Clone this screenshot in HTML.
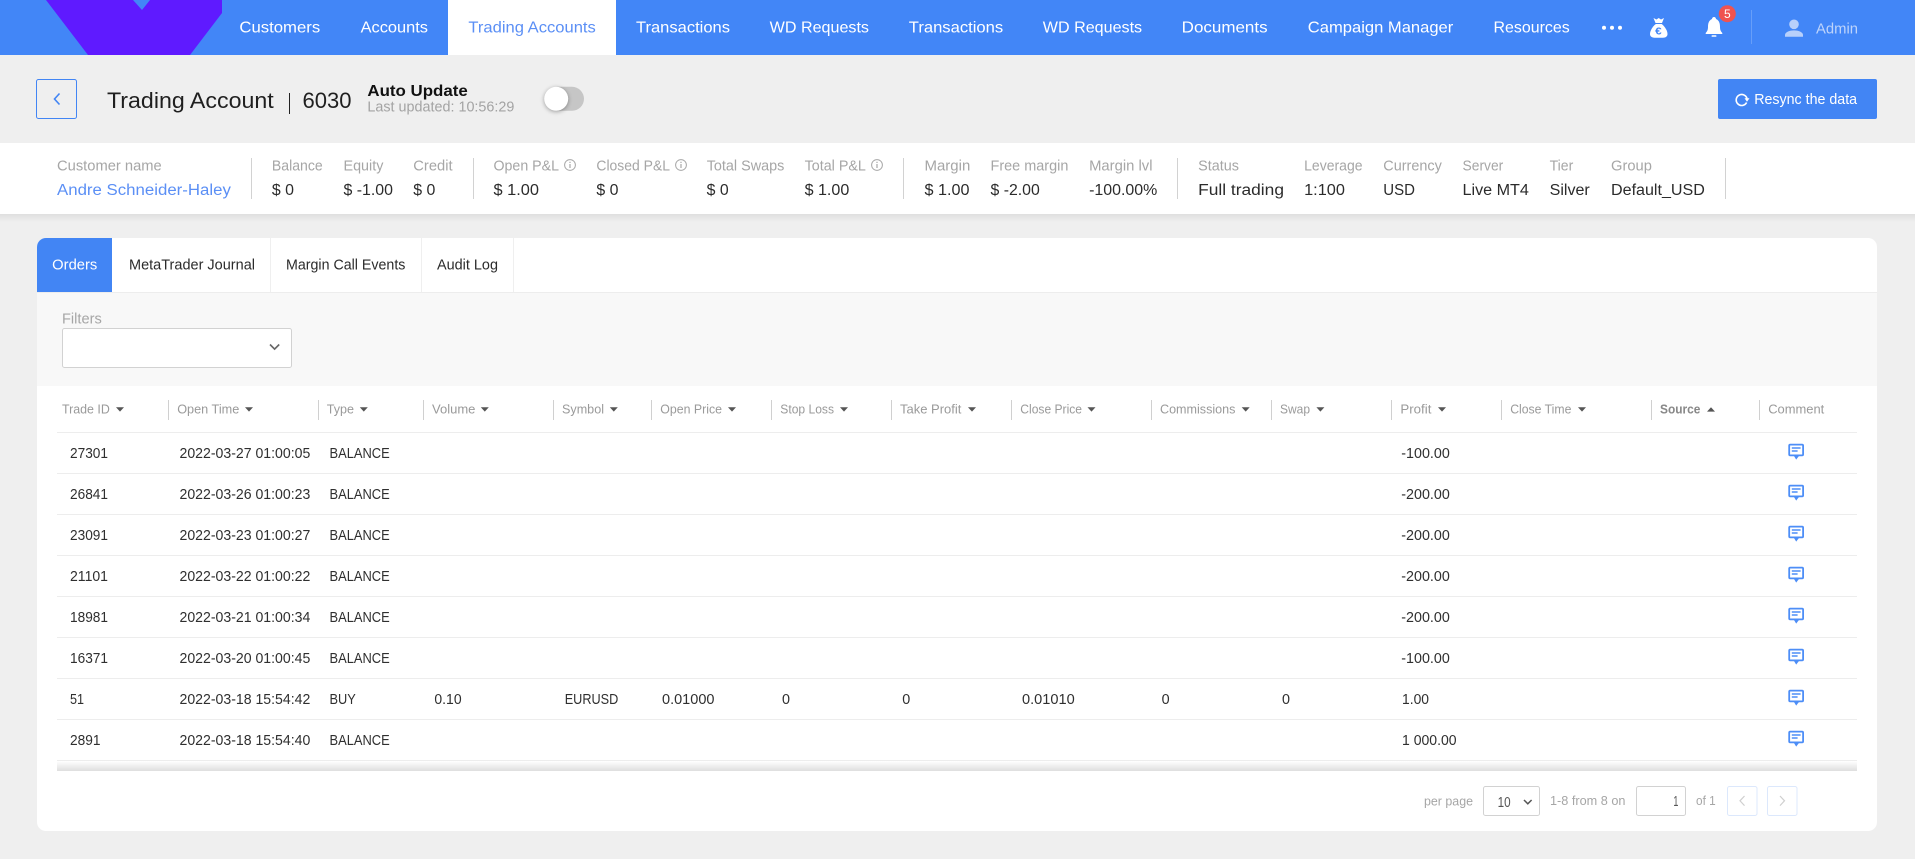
<!DOCTYPE html>
<html lang="en">
<head>
<meta charset="utf-8">
<title>Trading Account</title>
<style>
html,body{margin:0;padding:0;background:#efefef;width:1915px;height:859px;overflow:hidden}
svg{display:block}
text{font-family:"Liberation Sans",sans-serif;white-space:pre}
.n{font-size:16px;fill:#fff}
.l{font-size:14.5px;fill:#a6a6a6}
.v{font-size:15.5px;fill:#2b2b2b}
.h{font-size:13px;fill:#9a9a9a}
.c{font-size:14.3px;fill:#2f2f2f}
.t{font-size:14.5px;fill:#2b2b2b}
.p{font-size:13px;fill:#a6a6a6}
</style>
</head>
<body>
<svg width="1915" height="859" viewBox="0 0 1915 859" xmlns="http://www.w3.org/2000/svg">
<defs>
<linearGradient id="sb" x1="0" y1="0" x2="0" y2="1"><stop offset="0" stop-color="#dfdfdf"/><stop offset="1" stop-color="#efefef"/></linearGradient>
<linearGradient id="ts" x1="0" y1="0" x2="0" y2="1"><stop offset="0" stop-color="#fff"/><stop offset="1" stop-color="#dedede"/></linearGradient>
<path id="d" d="M-4 407.2h8l-4 4.4z" fill="#555"/>
<g id="ci">
<rect x="1789.2" y="444.6" width="13.9" height="10.8" rx="1" fill="#fff" stroke="#4d8ef7" stroke-width="1.8"/>
<path d="M1793.6 455.4h5.8l-3.2 4.2z" fill="#4d8ef7"/>
<path d="M1791.8 448h8.8M1791.8 451h5.8" stroke="#4d8ef7" stroke-width="1.5" fill="none"/>
</g>
<g id="in">
<circle cx="0" cy="165" r="5.4" fill="none" stroke="#a8a8a8" stroke-width="1"/>
<path d="M0 164v4M0 161.8v1.2" stroke="#a8a8a8" stroke-width="1.2" fill="none"/>
</g>
</defs>

<!-- top navigation -->
<rect width="1915" height="55" fill="#4286f7"/>
<path d="M46 0H133L142 10L150 0H222V13L190 55H88Z" fill="#5f1aff"/>
<rect x="448" width="168" height="55" fill="#fff"/>
<text class="n" x="239.4" y="32.5" textLength="80.8" lengthAdjust="spacingAndGlyphs">Customers</text>
<text class="n" x="360.6" y="32.5" textLength="67.4" lengthAdjust="spacingAndGlyphs">Accounts</text>
<text class="n" style="fill:#5b8ff5" x="468.4" y="32.5" textLength="127.4" lengthAdjust="spacingAndGlyphs">Trading Accounts</text>
<text class="n" x="636" y="32.5" textLength="94" lengthAdjust="spacingAndGlyphs">Transactions</text>
<text class="n" x="769.7" y="32.5" textLength="99.3" lengthAdjust="spacingAndGlyphs">WD Requests</text>
<text class="n" x="908.8" y="32.5" textLength="94.4" lengthAdjust="spacingAndGlyphs">Transactions</text>
<text class="n" x="1042.8" y="32.5" textLength="99.3" lengthAdjust="spacingAndGlyphs">WD Requests</text>
<text class="n" x="1181.7" y="32.5" textLength="85.9" lengthAdjust="spacingAndGlyphs">Documents</text>
<text class="n" x="1307.8" y="32.5" textLength="145.5" lengthAdjust="spacingAndGlyphs">Campaign Manager</text>
<text class="n" x="1493.5" y="32.5" textLength="76.2" lengthAdjust="spacingAndGlyphs">Resources</text>
<circle cx="1604" cy="27.7" r="2" fill="#fff"/><circle cx="1612" cy="27.7" r="2" fill="#fff"/><circle cx="1620" cy="27.7" r="2" fill="#fff"/>
<!-- money bag -->
<path d="M1653.5 18L1656.5 19.5L1658.7 18L1661 19.5L1664 18L1662 23H1655.5Z" fill="#fff"/>
<path d="M1655.8 24H1661.7C1665 26.5 1667.5 31 1667.5 34C1667.5 36.5 1665.5 37.7 1663 37.7H1654.5C1652 37.7 1650 36.5 1650 34C1650 31 1652.5 26.5 1655.8 24Z" fill="#fff"/>
<text x="1655.2" y="34.5" font-size="10" font-weight="bold" fill="#4286f7" textLength="6.5" lengthAdjust="spacingAndGlyphs">€</text>
<!-- bell -->
<path d="M1714 17c1.2 0 2 .9 2 2C1719.5 20.5 1720 24 1720 27c0 3 1 4.5 2.3 6v1h-16.6v-1c1.3-1.5 2.3-3 2.3-6 0-3 .5-6.5 4-8 0-1.1.8-2 2-2z" fill="#fff"/>
<rect x="1711.5" y="35.2" width="5" height="1.6" rx=".8" fill="#fff"/>
<circle cx="1727.3" cy="13.7" r="8.5" fill="#ef5350"/>
<text x="1727.3" y="18" font-size="12" fill="#fff" text-anchor="middle">5</text>
<rect x="1751" y="10" width="1" height="34" fill="#fff" fill-opacity=".2"/>
<!-- user -->
<circle cx="1794" cy="24.3" r="4.8" fill="#b8d0fb"/>
<path d="M1785 36.7v-1.7c0-3 5-4.6 9-4.6s9 1.6 9 4.6v1.7z" fill="#b8d0fb"/>
<text x="1816" y="33.7" font-size="14.5" fill="#bed4fb" textLength="42" lengthAdjust="spacingAndGlyphs">Admin</text>

<!-- page header -->
<rect x="36.5" y="79.5" width="40" height="39" rx="2" fill="none" stroke="#4285f4" stroke-width="1"/>
<path d="M59.5 93.5L54.5 99L59.5 104.5" fill="none" stroke="#4285f4" stroke-width="1.6"/>
<text x="107" y="108" font-size="22" fill="#1f1f1f" textLength="166.7" lengthAdjust="spacingAndGlyphs">Trading Account</text>
<rect x="289" y="93" width="1" height="21" fill="#222"/>
<text x="302.5" y="108" font-size="22" fill="#1f1f1f" textLength="49" lengthAdjust="spacingAndGlyphs">6030</text>
<text x="367.4" y="96" font-size="16" font-weight="bold" fill="#111" textLength="100.4" lengthAdjust="spacingAndGlyphs">Auto Update</text>
<text x="367.4" y="111.7" font-size="14.5" fill="#a3a3a3" textLength="147" lengthAdjust="spacingAndGlyphs">Last updated: 10:56:29</text>
<rect x="545" y="86.8" width="39" height="24" rx="12" fill="#c6c6c6"/>
<circle cx="556.2" cy="98.8" r="12" fill="#fff" style="filter:drop-shadow(0 1px 2px rgba(0,0,0,.35))"/>
<rect x="1718" y="79" width="159" height="40" rx="2" fill="#4285f4"/>
<path d="M1746.6 102.5A5.5 5.5 0 1 1 1747 98.5" fill="none" stroke="#fff" stroke-width="1.6"/>
<path d="M1744.5 98.3h5l-2.5 3.4z" fill="#fff"/>
<text x="1754.2" y="104" font-size="14.5" fill="#fff" textLength="102.9" lengthAdjust="spacingAndGlyphs">Resync the data</text>

<!-- info bar -->
<rect x="0" y="214" width="1915" height="8" fill="url(#sb)"/>
<rect x="0" y="143" width="1915" height="71" fill="#fff"/>
<g fill="#d2d2d2">
<rect x="251" y="158" width="1" height="41"/><rect x="473" y="158" width="1" height="41"/><rect x="903" y="158" width="1" height="41"/><rect x="1177" y="158" width="1" height="41"/><rect x="1725" y="158" width="1" height="41"/>
</g>
<g transform="translate(0,-.7)">
<text class="l" x="57" y="171" textLength="104.7" lengthAdjust="spacingAndGlyphs">Customer name</text>
<text class="l" x="271.9" y="171" textLength="50.8" lengthAdjust="spacingAndGlyphs">Balance</text>
<text class="l" x="343.5" y="171" textLength="39.9" lengthAdjust="spacingAndGlyphs">Equity</text>
<text class="l" x="413.3" y="171" textLength="39.3" lengthAdjust="spacingAndGlyphs">Credit</text>
<text class="l" x="493.5" y="171" textLength="65.5" lengthAdjust="spacingAndGlyphs">Open P&amp;L</text>
<text class="l" x="596.4" y="171" textLength="73.6" lengthAdjust="spacingAndGlyphs">Closed P&amp;L</text>
<text class="l" x="706.7" y="171" textLength="77.7" lengthAdjust="spacingAndGlyphs">Total Swaps</text>
<text class="l" x="804.6" y="171" textLength="61.3" lengthAdjust="spacingAndGlyphs">Total P&amp;L</text>
<text class="l" x="924.5" y="171" textLength="45.8" lengthAdjust="spacingAndGlyphs">Margin</text>
<text class="l" x="990.5" y="171" textLength="77.9" lengthAdjust="spacingAndGlyphs">Free margin</text>
<text class="l" x="1089.1" y="171" textLength="63.4" lengthAdjust="spacingAndGlyphs">Margin lvl</text>
<text class="l" x="1198.1" y="171" textLength="40.8" lengthAdjust="spacingAndGlyphs">Status</text>
<text class="l" x="1304.1" y="171" textLength="58.5" lengthAdjust="spacingAndGlyphs">Leverage</text>
<text class="l" x="1383.3" y="171" textLength="58.5" lengthAdjust="spacingAndGlyphs">Currency</text>
<text class="l" x="1462.5" y="171" textLength="40.8" lengthAdjust="spacingAndGlyphs">Server</text>
<text class="l" x="1549.6" y="171" textLength="23.7" lengthAdjust="spacingAndGlyphs">Tier</text>
<text class="l" x="1611" y="171" textLength="40.9" lengthAdjust="spacingAndGlyphs">Group</text>
</g>
<use href="#in" x="570"/><use href="#in" x="681"/><use href="#in" x="877"/>
<text class="v" style="fill:#5b8ff5" x="57" y="195" textLength="173.9" lengthAdjust="spacingAndGlyphs">Andre Schneider-Haley</text>
<text class="v" x="271.9" y="195" textLength="22.1" lengthAdjust="spacingAndGlyphs">$ 0</text>
<text class="v" x="343.5" y="195" textLength="49.5" lengthAdjust="spacingAndGlyphs">$ -1.00</text>
<text class="v" x="413.3" y="195" textLength="22.1" lengthAdjust="spacingAndGlyphs">$ 0</text>
<text class="v" x="493.5" y="195" textLength="45.5" lengthAdjust="spacingAndGlyphs">$ 1.00</text>
<text class="v" x="596.4" y="195" textLength="22.1" lengthAdjust="spacingAndGlyphs">$ 0</text>
<text class="v" x="706.7" y="195" textLength="22" lengthAdjust="spacingAndGlyphs">$ 0</text>
<text class="v" x="804.6" y="195" textLength="44.7" lengthAdjust="spacingAndGlyphs">$ 1.00</text>
<text class="v" x="924.5" y="195" textLength="45" lengthAdjust="spacingAndGlyphs">$ 1.00</text>
<text class="v" x="990.5" y="195" textLength="49.3" lengthAdjust="spacingAndGlyphs">$ -2.00</text>
<text class="v" x="1089.1" y="195" textLength="68.2" lengthAdjust="spacingAndGlyphs">-100.00%</text>
<text class="v" x="1198.1" y="195" textLength="85.9" lengthAdjust="spacingAndGlyphs">Full trading</text>
<text class="v" x="1304.1" y="195" textLength="40.8" lengthAdjust="spacingAndGlyphs">1:100</text>
<text class="v" x="1383.3" y="195" textLength="31.7" lengthAdjust="spacingAndGlyphs">USD</text>
<text class="v" x="1462.5" y="195" textLength="66.4" lengthAdjust="spacingAndGlyphs">Live MT4</text>
<text class="v" x="1549.6" y="195" textLength="40.2" lengthAdjust="spacingAndGlyphs">Silver</text>
<text class="v" x="1611" y="195" textLength="93.9" lengthAdjust="spacingAndGlyphs">Default_USD</text>

<!-- card -->
<rect x="37" y="238" width="1840" height="593" rx="9" fill="#fff"/>
<path d="M37 247a9 9 0 0 1 9-9H112V292H37Z" fill="#4285f4"/>
<rect x="37" y="292" width="1840" height="1" fill="#ededed"/>
<rect x="270" y="238" width="1" height="54" fill="#efefef"/><rect x="421" y="238" width="1" height="54" fill="#efefef"/><rect x="513" y="238" width="1" height="54" fill="#efefef"/>
<text class="t" style="fill:#fff" x="52.2" y="269.7" textLength="45.1" lengthAdjust="spacingAndGlyphs">Orders</text>
<text class="t" x="129" y="269.7" textLength="126" lengthAdjust="spacingAndGlyphs">MetaTrader Journal</text>
<text class="t" x="286" y="269.7" textLength="119.4" lengthAdjust="spacingAndGlyphs">Margin Call Events</text>
<text class="t" x="437" y="269.7" textLength="61" lengthAdjust="spacingAndGlyphs">Audit Log</text>
<rect x="37" y="293" width="1840" height="93" fill="#f8f8f8"/>
<text class="l" x="62" y="323.5" textLength="39.8" lengthAdjust="spacingAndGlyphs">Filters</text>
<rect x="62.5" y="328.5" width="229" height="39" rx="2" fill="#fff" stroke="#d2d2d2"/>
<path d="M270 344.5l4.6 4.6l4.6-4.6" fill="none" stroke="#666" stroke-width="1.6"/>

<!-- table header -->
<g fill="#d0d0d0">
<rect x="168" y="400" width="1" height="20"/><rect x="318" y="400" width="1" height="20"/><rect x="423" y="400" width="1" height="20"/><rect x="553" y="400" width="1" height="20"/><rect x="651" y="400" width="1" height="20"/><rect x="771" y="400" width="1" height="20"/><rect x="891" y="400" width="1" height="20"/><rect x="1011" y="400" width="1" height="20"/><rect x="1151" y="400" width="1" height="20"/><rect x="1271" y="400" width="1" height="20"/><rect x="1391" y="400" width="1" height="20"/><rect x="1501" y="400" width="1" height="20"/><rect x="1651" y="400" width="1" height="20"/><rect x="1759" y="400" width="1" height="20"/>
</g>
<g transform="translate(0,-.7)">
<text class="h" x="62" y="414" textLength="47.8" lengthAdjust="spacingAndGlyphs">Trade ID</text>
<text class="h" x="177.2" y="414" textLength="62.1" lengthAdjust="spacingAndGlyphs">Open Time</text>
<text class="h" x="326.8" y="414" textLength="27.2" lengthAdjust="spacingAndGlyphs">Type</text>
<text class="h" x="432" y="414" textLength="43.4" lengthAdjust="spacingAndGlyphs">Volume</text>
<text class="h" x="562" y="414" textLength="42" lengthAdjust="spacingAndGlyphs">Symbol</text>
<text class="h" x="660.3" y="414" textLength="61.7" lengthAdjust="spacingAndGlyphs">Open Price</text>
<text class="h" x="780.3" y="414" textLength="53.7" lengthAdjust="spacingAndGlyphs">Stop Loss</text>
<text class="h" x="900" y="414" textLength="61.4" lengthAdjust="spacingAndGlyphs">Take Profit</text>
<text class="h" x="1020.3" y="414" textLength="61.7" lengthAdjust="spacingAndGlyphs">Close Price</text>
<text class="h" x="1160" y="414" textLength="75.4" lengthAdjust="spacingAndGlyphs">Commissions</text>
<text class="h" x="1280" y="414" textLength="30" lengthAdjust="spacingAndGlyphs">Swap</text>
<text class="h" x="1400.4" y="414" textLength="31" lengthAdjust="spacingAndGlyphs">Profit</text>
<text class="h" x="1510.2" y="414" textLength="61.2" lengthAdjust="spacingAndGlyphs">Close Time</text>
<text class="h" style="fill:#888;font-weight:bold" x="1660" y="414" textLength="40.4" lengthAdjust="spacingAndGlyphs">Source</text>
<text class="h" x="1768.2" y="414" textLength="56.1" lengthAdjust="spacingAndGlyphs">Comment</text>
</g>
<use href="#d" x="120"/><use href="#d" x="249"/><use href="#d" x="363.8"/><use href="#d" x="484.8"/><use href="#d" x="613.8"/><use href="#d" x="732"/><use href="#d" x="844"/><use href="#d" x="972"/><use href="#d" x="1091.5"/><use href="#d" x="1245.7"/><use href="#d" x="1320.4"/><use href="#d" x="1442"/><use href="#d" x="1582"/>
<path d="M1707 411.6h8l-4-4.4z" fill="#555"/>

<!-- row lines -->
<g fill="#ededed">
<rect x="57" y="432" width="1800" height="1"/><rect x="57" y="473" width="1800" height="1"/><rect x="57" y="514" width="1800" height="1"/><rect x="57" y="555" width="1800" height="1"/><rect x="57" y="596" width="1800" height="1"/><rect x="57" y="637" width="1800" height="1"/><rect x="57" y="678" width="1800" height="1"/><rect x="57" y="719" width="1800" height="1"/><rect x="57" y="760" width="1800" height="1"/>
</g>
<rect x="57" y="761" width="1800" height="10" fill="url(#ts)"/>

<!-- rows -->
<g transform="translate(0,-.7)">
<text class="c" x="70" y="458.5" textLength="38" lengthAdjust="spacingAndGlyphs">27301</text>
<text class="c" x="179.5" y="458.5" textLength="130.8" lengthAdjust="spacingAndGlyphs">2022-03-27 01:00:05</text>
<text class="c" x="329.5" y="458.5" textLength="60.2" lengthAdjust="spacingAndGlyphs">BALANCE</text>
<text class="c" x="1401.3" y="458.5" textLength="48.5" lengthAdjust="spacingAndGlyphs">-100.00</text>

<text class="c" x="70" y="499.5" textLength="38" lengthAdjust="spacingAndGlyphs">26841</text>
<text class="c" x="179.5" y="499.5" textLength="130.8" lengthAdjust="spacingAndGlyphs">2022-03-26 01:00:23</text>
<text class="c" x="329.5" y="499.5" textLength="60.2" lengthAdjust="spacingAndGlyphs">BALANCE</text>
<text class="c" x="1401.3" y="499.5" textLength="48.5" lengthAdjust="spacingAndGlyphs">-200.00</text>

<text class="c" x="70" y="540.5" textLength="38" lengthAdjust="spacingAndGlyphs">23091</text>
<text class="c" x="179.5" y="540.5" textLength="130.8" lengthAdjust="spacingAndGlyphs">2022-03-23 01:00:27</text>
<text class="c" x="329.5" y="540.5" textLength="60.2" lengthAdjust="spacingAndGlyphs">BALANCE</text>
<text class="c" x="1401.3" y="540.5" textLength="48.5" lengthAdjust="spacingAndGlyphs">-200.00</text>

<text class="c" x="70" y="581.5" textLength="38" lengthAdjust="spacingAndGlyphs">21101</text>
<text class="c" x="179.5" y="581.5" textLength="130.8" lengthAdjust="spacingAndGlyphs">2022-03-22 01:00:22</text>
<text class="c" x="329.5" y="581.5" textLength="60.2" lengthAdjust="spacingAndGlyphs">BALANCE</text>
<text class="c" x="1401.3" y="581.5" textLength="48.5" lengthAdjust="spacingAndGlyphs">-200.00</text>

<text class="c" x="70" y="622.5" textLength="38" lengthAdjust="spacingAndGlyphs">18981</text>
<text class="c" x="179.5" y="622.5" textLength="130.8" lengthAdjust="spacingAndGlyphs">2022-03-21 01:00:34</text>
<text class="c" x="329.5" y="622.5" textLength="60.2" lengthAdjust="spacingAndGlyphs">BALANCE</text>
<text class="c" x="1401.3" y="622.5" textLength="48.5" lengthAdjust="spacingAndGlyphs">-200.00</text>

<text class="c" x="70" y="663.5" textLength="38" lengthAdjust="spacingAndGlyphs">16371</text>
<text class="c" x="179.5" y="663.5" textLength="130.8" lengthAdjust="spacingAndGlyphs">2022-03-20 01:00:45</text>
<text class="c" x="329.5" y="663.5" textLength="60.2" lengthAdjust="spacingAndGlyphs">BALANCE</text>
<text class="c" x="1401.3" y="663.5" textLength="48.5" lengthAdjust="spacingAndGlyphs">-100.00</text>

<text class="c" x="70" y="704.5" textLength="14" lengthAdjust="spacingAndGlyphs">51</text>
<text class="c" x="179.5" y="704.5" textLength="130.8" lengthAdjust="spacingAndGlyphs">2022-03-18 15:54:42</text>
<text class="c" x="329.5" y="704.5" textLength="26.3" lengthAdjust="spacingAndGlyphs">BUY</text>
<text class="c" x="434.4" y="704.5" textLength="27.2" lengthAdjust="spacingAndGlyphs">0.10</text>
<text class="c" x="564.7" y="704.5" textLength="53.6" lengthAdjust="spacingAndGlyphs">EURUSD</text>
<text class="c" x="662" y="704.5" textLength="52.5" lengthAdjust="spacingAndGlyphs">0.01000</text>
<text class="c" x="782" y="704.5" textLength="8" lengthAdjust="spacingAndGlyphs">0</text>
<text class="c" x="902.3" y="704.5" textLength="8" lengthAdjust="spacingAndGlyphs">0</text>
<text class="c" x="1022" y="704.5" textLength="52.7" lengthAdjust="spacingAndGlyphs">0.01010</text>
<text class="c" x="1161.7" y="704.5" textLength="8" lengthAdjust="spacingAndGlyphs">0</text>
<text class="c" x="1282" y="704.5" textLength="8" lengthAdjust="spacingAndGlyphs">0</text>
<text class="c" x="1402" y="704.5" textLength="27" lengthAdjust="spacingAndGlyphs">1.00</text>

<text class="c" x="70" y="745.5" textLength="30.5" lengthAdjust="spacingAndGlyphs">2891</text>
<text class="c" x="179.5" y="745.5" textLength="130.8" lengthAdjust="spacingAndGlyphs">2022-03-18 15:54:40</text>
<text class="c" x="329.5" y="745.5" textLength="60.2" lengthAdjust="spacingAndGlyphs">BALANCE</text>
<text class="c" x="1402" y="745.5" textLength="54.6" lengthAdjust="spacingAndGlyphs">1 000.00</text>
</g>

<use href="#ci"/><use href="#ci" y="41"/><use href="#ci" y="82"/><use href="#ci" y="123"/><use href="#ci" y="164"/><use href="#ci" y="205"/><use href="#ci" y="246"/><use href="#ci" y="287"/>

<!-- pagination -->
<text class="p" x="1424" y="805.5" textLength="49" lengthAdjust="spacingAndGlyphs">per page</text>
<rect x="1483.5" y="786.5" width="56" height="29" rx="2" fill="#fff" stroke="#d2d2d2"/>
<text class="c" style="fill:#555" x="1497.6" y="807" textLength="13" lengthAdjust="spacingAndGlyphs">10</text>
<path d="M1524 800l3.8 3.8l3.8-3.8" fill="none" stroke="#555" stroke-width="1.5"/>
<text class="p" x="1550" y="805" textLength="75.5" lengthAdjust="spacingAndGlyphs">1-8 from 8 on</text>
<rect x="1636.5" y="786.5" width="49" height="29" rx="2" fill="#fff" stroke="#d2d2d2"/>
<text class="c" style="fill:#555" x="1673.4" y="806" textLength="5" lengthAdjust="spacingAndGlyphs">1</text>
<text class="p" x="1696" y="805" textLength="19.7" lengthAdjust="spacingAndGlyphs">of 1</text>
<rect x="1727.5" y="786.5" width="29.5" height="29" rx="2" fill="#fff" stroke="#dce8fc"/>
<path d="M1744.5 796l-4.5 4.8l4.5 4.8" fill="none" stroke="#cfcfcf" stroke-width="1.2"/>
<rect x="1767.5" y="786.5" width="29.5" height="29" rx="2" fill="#fff" stroke="#dce8fc"/>
<path d="M1780 796l4.5 4.8l-4.5 4.8" fill="none" stroke="#cfcfcf" stroke-width="1.2"/>
</svg>
</body>
</html>
